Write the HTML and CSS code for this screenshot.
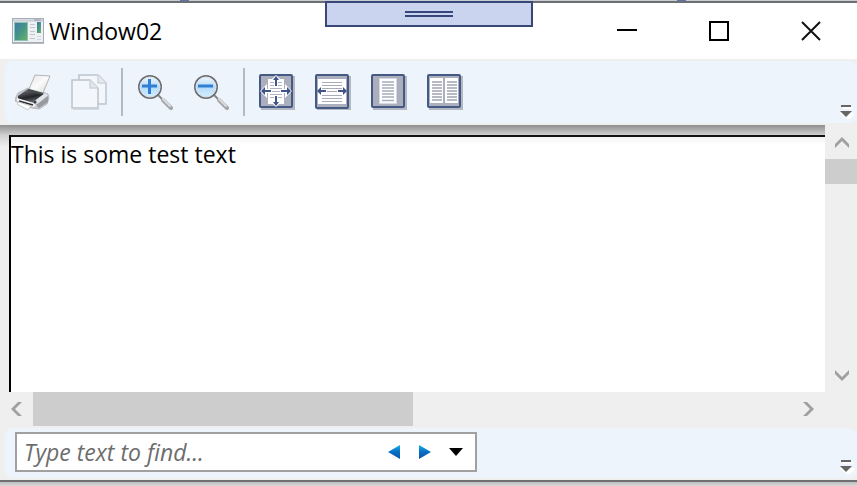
FILE: index.html
```html
<!DOCTYPE html>
<html lang="en">
<head>
  <meta charset="UTF-8">
  <title>Window02</title>
  <link rel="stylesheet" href="styles.css">
</head>
<body>
  <div class="backdrop"></div>
  <div class="window">
    <div class="drag-tab"><span class="grip"></span></div>

    <header class="titlebar">
      <svg class="app-icon" width="32" height="26" viewBox="0 0 32 26">
        <defs>
          <linearGradient id="pane" x1="0" y1="0" x2="1" y2="1">
            <stop offset="0" stop-color="#3f78a8"/>
            <stop offset="0.5" stop-color="#459488"/>
            <stop offset="1" stop-color="#6cb562"/>
          </linearGradient>
        </defs>
        <rect x="0.5" y="0.5" width="31" height="24" fill="#eef0f3" stroke="#a5adb8"/>
        <path d="M1 2.500h30" stroke="#c9ced6" stroke-width="2"/>
        <path d="M22 2h7" stroke="#8e99a8"/>
        <path d="M0 25.500h32" stroke="#b5b9bd"/>
        <rect x="2.500" y="4.500" width="13" height="18" fill="url(#pane)" stroke="#8fc0b4"/>
        <path d="M18 6.500h5M18 9.500h5M18 13.500h5M18 16.500h5M18 20.500h5" stroke="#c3c6ca"/>
        <rect x="25" y="4" width="4" height="11" fill="url(#pane)"/>
        <path d="M25 18.500h4M25 21.500h4" stroke="#d3d6da"/>
      </svg>
      <h1 class="title">Window02</h1>
      <button class="win-btn" aria-label="Minimize">
        <svg width="20" height="20" viewBox="0 0 20 20"><path d="M0 9h20" stroke="#000" stroke-width="2"/></svg>
      </button>
      <button class="win-btn" aria-label="Maximize">
        <svg width="20" height="20" viewBox="0 0 20 20"><rect x="1" y="1" width="18" height="18" fill="none" stroke="#000" stroke-width="2"/></svg>
      </button>
      <button class="win-btn" aria-label="Close">
        <svg width="20" height="20" viewBox="0 0 20 20"><path d="M1 1l18 18M19 1L1 19" stroke="#111" stroke-width="2"/></svg>
      </button>
    </header>

    <div class="toolbar">
      <button class="tool" aria-label="Print">
        <svg width="36" height="36" viewBox="0 0 36 36">
          <defs>
            <linearGradient id="paper" x1="0" y1="0" x2="1" y2="1">
              <stop offset="0" stop-color="#e4e4e4"/>
              <stop offset="0.5" stop-color="#fbfbfb"/>
              <stop offset="1" stop-color="#d4d4d4"/>
            </linearGradient>
            <linearGradient id="tray" x1="0.300" y1="0" x2="0.700" y2="1">
              <stop offset="0" stop-color="#6f7277"/>
              <stop offset="0.5" stop-color="#222428"/>
              <stop offset="1" stop-color="#85888e"/>
            </linearGradient>
          </defs>
          <path d="M0 25l3-6 10-5 4 1 11 3 5 2 1 4-2 6-8 5-7-1-17-7z" fill="#c6c8cd" stroke="#a5a8ad" stroke-width="0.700"/>
          <path d="M14 15L20 1l15 1-7 17z" fill="url(#paper)" stroke="#a3a3a3" stroke-width="0.800"/>
          <path d="M3 22l10-7 14 4 4 2-8 7-5 2-15-4z" fill="url(#tray)"/>
          <path d="M13 15l15 4-1 2-14-4z" fill="#45484d"/>
          <path d="M18 28l12-9 3 2-10 9z" fill="#e2e4e7"/>
          <path d="M21 31l12-9v6l-9 6z" fill="#989ba1"/>
          <path d="M2 24l17 5 2 3-3 1-16-6z" fill="#f4f4f5"/>
          <path d="M4 27l14 4" stroke="#2b2d30" stroke-width="1.500"/>
          <circle cx="20" cy="28" r="1.500" fill="#3c3f44"/>
          <path d="M4 28l12 4-3 4-11-6z" fill="#fff" stroke="#b5b5b5" stroke-width="0.700"/>
        </svg>
      </button>
      <button class="tool" aria-label="Copy" disabled>
        <svg width="36" height="36" viewBox="0 0 36 36">
          <g fill="#f3f6fa" stroke="#bcc3cd" stroke-width="1.500">
            <path d="M8 1h19l8 8v21H8z"/>
            <path d="M27 1v8h8" fill="#e4e9ef" stroke="#cdd3db"/>
            <path d="M1 6h18l8 8v20H1z"/>
            <path d="M19 6v8h8" fill="#e1e6ed" stroke="#cdd3db"/>
          </g>
          <path d="M2 35.500h26" stroke="#d5dae1"/>
        </svg>
      </button>
      <span class="separator"></span>
      <button class="tool" aria-label="Zoom in">
        <svg width="36" height="36" viewBox="0 0 36 36">
          <defs>
            <linearGradient id="lens" x1="0" y1="0" x2="0" y2="1">
              <stop offset="0" stop-color="#f4f9ff"/>
              <stop offset="0.5" stop-color="#b4dafa"/>
              <stop offset="1" stop-color="#d4f0ff"/>
            </linearGradient>
          </defs>
          <path d="M21 21l5 5" stroke="#85888d" stroke-width="2"/>
          <path d="M26 26l8 8" stroke="#a3a4a8" stroke-width="4" stroke-linecap="round"/>
          <path d="M26 25l7 7" stroke="#dcdcde" stroke-width="2" stroke-linecap="round"/>
          <circle cx="13" cy="13" r="11" fill="url(#lens)" stroke="#6c6e72" stroke-width="2"/>
          <circle cx="13" cy="13" r="10" fill="none" stroke="#dfe4ea"/>
          <path d="M5 12h15M12.500 5v15" stroke="#2f7fd3" stroke-width="3"/>
        </svg>
      </button>
      <button class="tool" aria-label="Zoom out">
        <svg width="36" height="36" viewBox="0 0 36 36">
          <path d="M21 21l5 5" stroke="#85888d" stroke-width="2"/>
          <path d="M26 26l8 8" stroke="#a3a4a8" stroke-width="4" stroke-linecap="round"/>
          <path d="M26 25l7 7" stroke="#dcdcde" stroke-width="2" stroke-linecap="round"/>
          <circle cx="13" cy="13" r="11" fill="url(#lens)" stroke="#6c6e72" stroke-width="2"/>
          <circle cx="13" cy="13" r="10" fill="none" stroke="#dfe4ea"/>
          <path d="M5 12h15" stroke="#2f7fd3" stroke-width="3"/>
        </svg>
      </button>
      <span class="separator"></span>
      <button class="tool" aria-label="Actual size">
        <svg width="36" height="36" viewBox="0 0 36 36">
          <rect x="2" y="2" width="34" height="34" fill="#b4b8c2"/>
          <rect x="1" y="1" width="32" height="32" rx="1" fill="#abafbd" stroke="#455985" stroke-width="2"/>
          <rect x="9" y="5" width="16" height="25" fill="#fff"/>
          <path d="M11 8.500h12M11 11.500h12M11 14.500h12M11 20.500h12M11 23.500h12M11 26.500h12" stroke="#b0b3c0"/>
          <path d="M1 17l7-7v5h5v4H8v5zM33 17l-7-7v5h-5v4h5v5zM17 1l-7 7h5v5h4V8h5zM17 33l-7-7h5v-5h4v5h5z" fill="#fff"/>
          <path d="M13 17.500h8" stroke="#b0b3c0"/>
          <path d="M4 17h8M30 17h-8M17 4v8M17 30v-8" stroke="#405485" stroke-width="2"/>
          <path d="M2 17l4-4v8zM32 17l-4-4v8zM17 2l-3 4h6zM17 32l-3-4h6z" fill="#405485"/>
        </svg>
      </button>
      <button class="tool" aria-label="Fit to width">
        <svg width="36" height="36" viewBox="0 0 36 36">
          <rect x="2" y="2" width="34" height="34" fill="#b4b8c2"/>
          <rect x="1" y="1" width="32" height="33" rx="1" fill="#abafbd" stroke="#455985" stroke-width="2"/>
          <rect x="3" y="5" width="28" height="25" fill="#fff"/>
          <path d="M7 8.500h20M7 11.500h20M7 14.500h20M12 17.500h10M7 21.500h20M7 24.500h20M7 27.500h20" stroke="#a8abba"/>
          <path d="M4 17h7M30 17h-7" stroke="#405485" stroke-width="2"/>
          <path d="M2 17l4-4v8zM32 17l-4-4v8z" fill="#405485"/>
        </svg>
      </button>
      <button class="tool" aria-label="Whole page">
        <svg width="36" height="36" viewBox="0 0 36 36">
          <rect x="2" y="2" width="34" height="34" fill="#b4b8c2"/>
          <rect x="1" y="1" width="32" height="32" rx="1" fill="#abafbd" stroke="#455985" stroke-width="2"/>
          <rect x="8.500" y="4.500" width="17" height="25" fill="#fff" stroke="#d5d7de"/>
          <path d="M11 8h12M11 11h12M11 14h12M11 17h12M11 20h12M11 23h12M11 26.500h12" stroke="#a8abba" stroke-width="1.500"/>
        </svg>
      </button>
      <button class="tool" aria-label="Two pages">
        <svg width="36" height="36" viewBox="0 0 36 36">
          <rect x="2" y="2" width="34" height="34" fill="#b4b8c2"/>
          <rect x="1" y="1" width="32" height="32" rx="1" fill="#abafbd" stroke="#455985" stroke-width="2"/>
          <path d="M3 4h13v25H3zM18 4h13v25H18z" fill="#fff"/>
          <path d="M5 8h10M5 11h10M5 14h10M5 17h10M5 20h10M5 23h10M5 26h10M20 8h10M20 11h10M20 14h10M20 17h10M20 20h10M20 23h10M20 26h10" stroke="#a0a3b4" stroke-width="1.500"/>
        </svg>
      </button>
      <button class="overflow" aria-label="Toolbar options">
        <svg width="14" height="14" viewBox="0 0 14 14">
          <path d="M3 3h10M2 9h12l-6 5z" fill="#fff" stroke="#fff" stroke-width="2"/>
          <path d="M1 1h10" stroke="#666" stroke-width="2"/>
          <path d="M0 6h12l-6 6z" fill="#666"/>
        </svg>
      </button>
    </div>

    <main class="viewer">
      <div class="page-area">
        <div class="page">
          <p class="page-text">This is some test text</p>
        </div>
      </div>
      <div class="vscroll">
        <button class="arrow" aria-label="Scroll up">
          <svg width="14" height="12" viewBox="0 0 14 12"><path d="M0 8l7-7 7 7v4L7 5l-7 7z" fill="#a0a0a0"/></svg>
        </button>
        <div class="vtrack"><div class="vthumb"></div></div>
        <button class="arrow" aria-label="Scroll down">
          <svg width="14" height="12" viewBox="0 0 14 12"><path d="M0 1l7 7 7-7v4l-7 7-7-7z" fill="#a0a0a0"/></svg>
        </button>
      </div>
      <div class="hscroll">
        <button class="arrow" aria-label="Scroll left">
          <svg width="12" height="14" viewBox="0 0 12 14"><path d="M7 0L0 7l7 7h4L4 7l7-7z" fill="#a0a0a0"/></svg>
        </button>
        <div class="htrack"><div class="hthumb"></div></div>
        <button class="arrow" aria-label="Scroll right">
          <svg width="12" height="14" viewBox="0 0 12 14"><path d="M4 0l7 7-7 7H0l7-7-7-7z" fill="#a0a0a0"/></svg>
        </button>
      </div>
    </main>

    <div class="findbar">
      <div class="findbox">
        <input class="find-input" type="text" placeholder="Type text to find..." aria-label="Type text to find">
        <button class="find-btn" aria-label="Find previous">
          <svg width="12" height="14" viewBox="0 0 12 14">
            <defs>
              <linearGradient id="blue" x1="0" y1="0" x2="0" y2="1">
                <stop offset="0" stop-color="#12b4ea"/>
                <stop offset="0.5" stop-color="#0a6cc4"/>
                <stop offset="1" stop-color="#0757b0"/>
              </linearGradient>
            </defs>
            <path d="M12 0v14L0 7z" fill="url(#blue)"/>
          </svg>
        </button>
        <button class="find-btn" aria-label="Find next">
          <svg width="12" height="14" viewBox="0 0 12 14"><path d="M0 0v14l12-7z" fill="url(#blue)"/></svg>
        </button>
        <button class="find-btn" aria-label="Find options">
          <svg width="14" height="8" viewBox="0 0 14 8"><path d="M0 0h14L7 8z" fill="#000"/></svg>
        </button>
      </div>
      <button class="overflow" aria-label="Find toolbar options">
        <svg width="14" height="14" viewBox="0 0 14 14">
          <path d="M3 3h10M2 9h12l-6 5z" fill="#fff" stroke="#fff" stroke-width="2"/>
          <path d="M1 1h10" stroke="#666" stroke-width="2"/>
          <path d="M0 6h12l-6 6z" fill="#666"/>
        </svg>
      </button>
    </div>
  </div>
  <div class="window-shadow"></div>
</body>
</html>
```
FILE: styles.css
```css
* {
  box-sizing: border-box;
}
body {
  margin: 0;
  min-height: 100vh;
  display: flex;
  flex-direction: column;
  background-color: #efefef;
  font-family: "Open Sans", "Noto Sans", sans-serif;
  font-size: 23px;
  color: #000;
}
button {
  display: flex;
  align-items: center;
  justify-content: center;
  padding: 0;
  border: none;
  background: none;
}
svg {
  display: block;
}
.backdrop {
  height: 1px;
  background: linear-gradient(90deg, #c8cdd3 21%, #5d73a5 21%, #5d73a5 22%, #c8cdd3 22%, #c8cdd3 79%, #5d73a5 79%, #5d73a5 80%, #c8cdd3 80%);
}
.window {
  position: relative;
  flex: 1;
  display: flex;
  flex-direction: column;
  border-top: 2px solid #6d6f72;
  border-bottom: 2px solid #6d6f72;
}
.window-shadow {
  height: 4px;
  background: linear-gradient(#bdbdbd, #d8d8d8);
}

/* docked handle over the title bar */
.drag-tab {
  position: absolute;
  top: -2px;
  left: 50%;
  transform: translateX(-50%);
  width: 208px;
  height: 26px;
  padding-top: 8px;
  border: 2px solid #38477a;
  background-color: #cad4ef;
}
.grip {
  display: block;
  width: 48px;
  height: 6px;
  margin: 0 auto;
  border-top: 2px solid #38477a;
  border-bottom: 2px solid #38477a;
}

.titlebar {
  display: flex;
  align-items: center;
  height: 56px;
  padding-left: 12px;
  background-color: #fff;
}
.title {
  flex: 1;
  margin: 0;
  padding-left: 5px;
  font-size: 23px;
  font-weight: normal;
}
.win-btn {
  width: 92px;
  height: 54px;
}

.toolbar,
.findbar {
  display: flex;
  align-items: center;
  margin: 2px 0 2px 5px;
  border-radius: 8px;
  background-color: #edf4fc;
}
.toolbar {
  height: 62px;
}
.tool {
  width: 56px;
  height: 56px;
}
.separator {
  width: 2px;
  height: 48px;
  margin: 0 4px;
  background-color: #b4bac3;
}
.overflow {
  align-self: flex-end;
  margin: 0 3px 4px auto;
}

.viewer {
  flex: 1;
  display: grid;
  grid-template-columns: 1fr 32px;
  grid-template-rows: 1fr 34px;
}
.page-area {
  display: flex;
  padding: 10px 0 0 9px;
  background: linear-gradient(#8f8f8f, #d0d0d0 10px, #efefef 22px);
}
.page {
  flex: 1;
  border-top: 2px solid #111;
  border-left: 2px solid #000;
  background: linear-gradient(#f4f4f4, #fff 8px);
}
.page-text {
  margin: 0;
  line-height: 34px;
}
.vscroll {
  display: flex;
  flex-direction: column;
  padding-left: 2px;
}
.vscroll .arrow {
  height: 34px;
}
.vtrack {
  flex: 1;
  margin-left: -2px;
}
.vthumb {
  height: 25px;
  background-color: #cdcdcd;
}
.hscroll {
  display: flex;
}
.hscroll .arrow {
  width: 33px;
}
.htrack {
  flex: 1;
}
.hthumb {
  width: 50%;
  height: 34px;
  background-color: #cdcdcd;
}

.findbar {
  height: 50px;
}
.findbox {
  display: flex;
  align-items: center;
  width: 462px;
  height: 40px;
  margin: 0 0 2px 10px;
  padding-right: 4px;
  border: 2px solid #a0a0a0;
  background-color: #fff;
}
.find-input {
  flex: 1;
  min-width: 0;
  height: 36px;
  padding: 0 0 0 7px;
  border: none;
  outline: none;
  background: none;
  font: italic 23px "Open Sans", "Noto Sans", sans-serif;
}
.find-input::placeholder {
  color: #6d6d6d;
}
.find-btn {
  width: 31px;
  height: 36px;
}
```
